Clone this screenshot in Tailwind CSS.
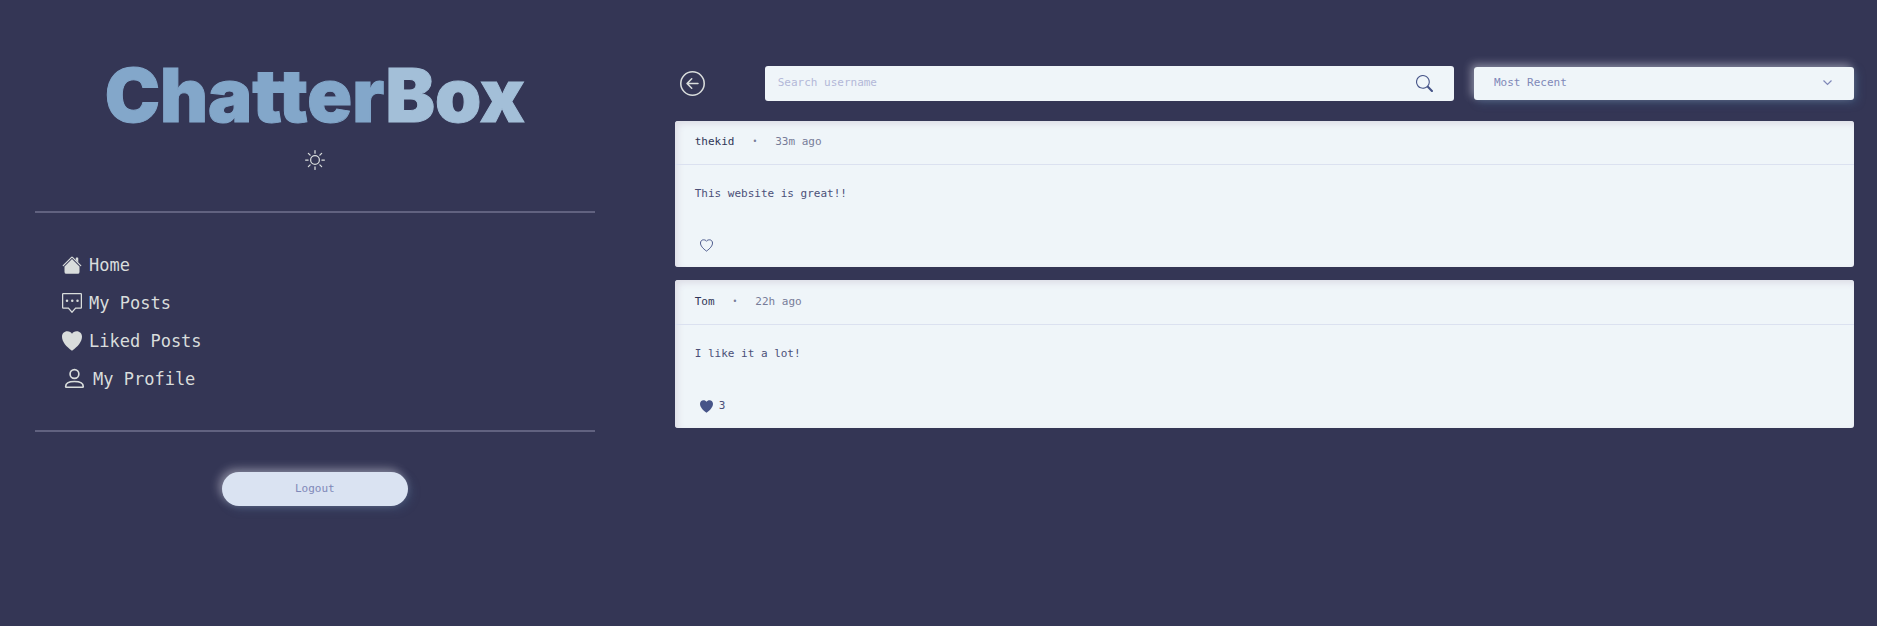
<!DOCTYPE html>
<html lang="en">
<head>
<meta charset="utf-8">
<meta name="viewport" content="width=device-width, initial-scale=1">
<title>ChatterBox</title>
<script src="https://cdn.jsdelivr.net/npm/@tailwindcss/browser@4"></script>
</head>
<body class="min-h-screen bg-[#343655] font-['DejaVu_Sans_Mono',monospace] text-[11px] leading-4">
<div class="grid min-h-screen grid-cols-[1fr_2fr]">
  <aside class="flex flex-col pt-[52px] pr-[31px] pl-[35px]">
    <h1 class="text-center font-['Inter',sans-serif] text-[74px] leading-[86px] font-black whitespace-nowrap text-[#83a7ca] [-webkit-text-stroke:1px_currentColor]">Chatter<span class="text-[#a3bfd8]">Box</span></h1>
    <button type="button" aria-label="Toggle light mode" class="mt-3 self-center text-[#d9dddc]">
      <svg class="size-5" viewBox="0 0 16 16" fill="currentColor"><path d="M8 11a3 3 0 1 1 0-6 3 3 0 0 1 0 6zm0 1a4 4 0 1 0 0-8 4 4 0 0 0 0 8zM8 0a.5.5 0 0 1 .5.5v2a.5.5 0 0 1-1 0v-2A.5.5 0 0 1 8 0zm0 13a.5.5 0 0 1 .5.5v2a.5.5 0 0 1-1 0v-2A.5.5 0 0 1 8 13zm8-5a.5.5 0 0 1-.5.5h-2a.5.5 0 0 1 0-1h2a.5.5 0 0 1 .5.5zM3 8a.5.5 0 0 1-.5.5h-2a.5.5 0 0 1 0-1h2A.5.5 0 0 1 3 8zm10.657-5.657a.5.5 0 0 1 0 .707l-1.414 1.415a.5.5 0 1 1-.707-.708l1.414-1.414a.5.5 0 0 1 .707 0zm-9.193 9.193a.5.5 0 0 1 0 .707L3.05 13.657a.5.5 0 0 1-.707-.707l1.414-1.414a.5.5 0 0 1 .707 0zm9.193 2.121a.5.5 0 0 1-.707 0l-1.414-1.414a.5.5 0 0 1 .707-.707l1.414 1.414a.5.5 0 0 1 0 .707zM4.464 4.465a.5.5 0 0 1-.707 0L2.343 3.05a.5.5 0 1 1 .707-.707l1.414 1.414a.5.5 0 0 1 0 .708z"/></svg>
    </button>
    <nav class="mt-[41px] flex flex-col items-start gap-[14px] border-y-2 border-[#616280] pt-10 pb-[39px] pl-[27px] text-[17px] leading-6 text-[#d9dddc]">
      <a href="#home" class="flex items-center gap-[7px]">
        <svg class="size-5" viewBox="0 0 16 16" fill="currentColor"><path d="m8 3.293 6 6V13.5a1.5 1.5 0 0 1-1.5 1.5h-9A1.5 1.5 0 0 1 2 13.500V9.293l6-6zm5-.793V6l-2-2V2.500a.5.5 0 0 1 .5-.5h1a.5.5 0 0 1 .5.500z"/><path d="M7.293 1.500a1 1 0 0 1 1.414 0l6.647 6.646a.5.5 0 0 1-.708.708L8 2.207 1.354 8.854a.5.5 0 1 1-.708-.708L7.293 1.500z"/></svg>
        Home</a>
      <a href="#posts" class="flex items-center gap-[7px]">
        <svg class="size-5" viewBox="0 0 16 16" fill="none" stroke="currentColor"><path d="M1 .5h14a.5.5 0 0 1 .5.5v10.500a.5.5 0 0 1-.5.5h-4.100L8 15.400 5.100 12H1a.5.5 0 0 1-.5-.5V1A.5.5 0 0 1 1 .5z"/><g fill="currentColor" stroke="none"><circle cx="4" cy="6.200" r="1"/><circle cx="8.200" cy="6.200" r="1"/><circle cx="12.400" cy="6.200" r="1"/></g></svg>
        My Posts</a>
      <a href="#liked" class="flex items-center gap-[7px]">
        <svg class="size-5" viewBox="0 0 16 16" fill="currentColor"><path d="M4.200.2C6 .2 7.400 1 8 2.200 8.600 1 10 .2 11.800.2 14.200.2 16 2 16 4.600c0 4-3.500 8-8 11.200C3.500 12.600 0 8.600 0 4.600 0 2 1.800.2 4.200.2z"/></svg>
        Liked Posts</a>
      <a href="#profile" class="flex items-center gap-2 pl-px">
        <svg class="size-[22px]" viewBox="0 0 24 24" fill="none" stroke="currentColor" stroke-width="1.800"><circle cx="12.500" cy="6.500" r="4.800"/><path d="M2.900 20.200c0-4 4-5.500 9.600-5.500s9.600 1.500 9.600 5.500a.8.8 0 0 1-.8.800H3.700a.8.8 0 0 1-.8-.8z"/></svg>
        My Profile</a>
    </nav>
    <button type="button" class="mt-10 h-[34px] w-[186px] self-center rounded-full bg-[#dae3f2] pb-px text-[#7f88b8] shadow-[-3px_-3px_10px_rgba(255,250,255,0.4),3px_3px_10px_rgba(70,100,140,0.4)]">Logout</button>
  </aside>

  <main class="pt-[66px] pr-[23px] pl-[49px]">
    <div class="flex items-center">
      <button type="button" aria-label="Back" class="ml-[5px] text-[#d9dddc]">
        <svg class="size-[25px]" viewBox="0 0 16 16" fill="currentColor"><path fill-rule="evenodd" d="M1 8a7 7 0 1 0 14 0A7 7 0 0 0 1 8zm15 0A8 8 0 1 1 0 8a8 8 0 0 1 16 0zm-4.500-.5a.5.5 0 0 1 0 1H5.707l2.147 2.146a.5.5 0 0 1-.708.708l-3-3a.5.5 0 0 1 0-.708l3-3a.5.5 0 1 1 .708.708L5.707 7.500H11.500z"/></svg>
      </button>
      <form class="ml-[60px] flex h-[35px] flex-1 items-center rounded-[3px] bg-[#eff5f9] pr-[21px] pl-[13px]">
        <input type="text" aria-label="Search username" placeholder="Search username" class="min-w-0 flex-1 pb-[2px] text-[#4a5585] outline-none placeholder:text-[#b3b8d8]">
        <button type="submit" aria-label="Search" class="text-[#465488]">
          <svg class="size-[17px]" viewBox="0 0 16 16" fill="currentColor"><path d="M11.742 10.344a6.500 6.500 0 1 0-1.397 1.398h-.001c.03.040.062.078.098.115l3.850 3.850a1 1 0 0 0 1.415-1.414l-3.850-3.850a1.007 1.007 0 0 0-.115-.1zM12 6.500a5.500 5.500 0 1 1-11 0 5.500 5.500 0 0 1 11 0z"/></svg>
        </button>
      </form>
      <div class="relative ml-5 w-[380px] rounded-[3px] shadow-[-3px_-3px_8px_rgba(255,250,255,0.4),3px_3px_8px_rgba(70,110,150,0.4)]">
        <select aria-label="Sort posts" class="block h-[33px] w-full appearance-none rounded-[3px] bg-[#eff5f9] pb-[2px] pl-5 text-[#7f88b8] outline-none">
          <option>Most Recent</option>
          <option>Most Liked</option>
        </select>
        <svg class="pointer-events-none absolute top-[11px] right-[22px] size-[9px] text-[#7f88b8]" viewBox="0 0 9 9" fill="none" stroke="currentColor" stroke-width="1.200"><path d="M.5 2.500l4 4 4-4"/></svg>
      </div>
    </div>

    <section class="mt-5 flex flex-col gap-[13px]">
      <article class="rounded-[3px] bg-[#eff5f9] shadow-[inset_3px_3px_6px_#dddde6]">
        <header class="flex h-11 items-center border-b border-[#dbe1f0] px-5 pb-px text-[#777c98]">
          <span class="text-[#2f3557]">thekid</span><span class="mx-[18px] text-[8px]">•</span><time>33m ago</time>
        </header>
        <p class="px-5 pt-[21px] text-[#4b5078]">This website is great!!</p>
        <div class="flex items-center gap-[6px] px-[25px] pt-[35px] pb-[14px] text-[#4b5078]">
          <button type="button" aria-label="Like" class="flex h-4 items-center text-[#465488]"><svg class="size-[13px]" viewBox="0 0 16 16" fill="none" stroke="currentColor" stroke-width="1.200"><path d="M4.400 1C6.200 1 7.500 1.800 8 2.800 8.500 1.800 9.800 1 11.600 1c2.200 0 3.800 1.600 3.800 4 0 3.400-3.200 6.900-7.400 9.900C3.800 11.900.6 8.400.6 5c0-2.400 1.600-4 3.800-4z"/></svg></button>
        </div>
      </article>
      <article class="rounded-[3px] bg-[#eff5f9] shadow-[inset_3px_3px_6px_#dddde6]">
        <header class="flex h-[45px] items-center border-b border-[#dbe1f0] px-5 pb-px text-[#777c98]">
          <span class="text-[#2f3557]">Tom</span><span class="mx-[18px] text-[8px]">•</span><time>22h ago</time>
        </header>
        <p class="px-5 pt-[21px] text-[#4b5078]">I like it a lot!</p>
        <div class="flex items-center gap-[6px] px-[25px] pt-[36px] pb-[14px] text-[#4b5078]">
          <button type="button" aria-label="Unlike" class="flex h-4 items-center text-[#465488]"><svg class="size-[13px]" viewBox="0 0 16 16" fill="currentColor"><path d="M4.200.2C6 .2 7.400 1 8 2.200 8.600 1 10 .2 11.800.2 14.200.2 16 2 16 4.600c0 4-3.500 8-8 11.200C3.500 12.600 0 8.600 0 4.600 0 2 1.800.2 4.200.2z"/></svg></button>
          <span>3</span>
        </div>
      </article>
    </section>
  </main>
</div>
</body>
</html>
